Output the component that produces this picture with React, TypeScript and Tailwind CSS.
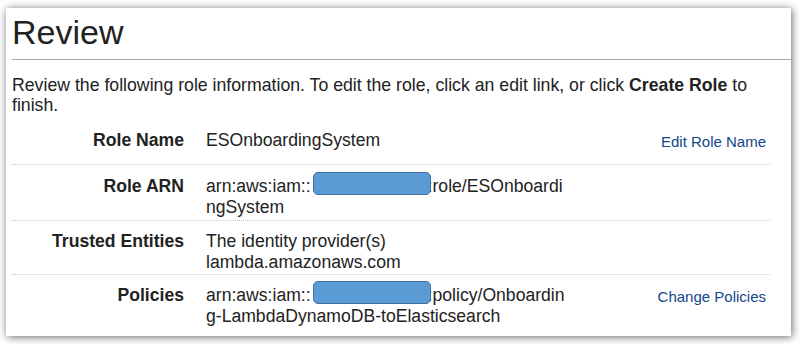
import React from "react";

const Box = () => (
  <span className="relative z-10 inline-block h-[23px] w-[118px] -mt-[5px] ml-[2px] -mr-[3px] align-[-3px] rounded-[5px] border-[1.5px] border-[#41719c] bg-[#5b9bd5]" />
);

function Row({
  label,
  children,
  link,
  className,
  last,
}: {
  label: string;
  children: React.ReactNode;
  link?: string;
  className: string;
  last?: boolean;
}) {
  return (
    <div
      className={`flex items-start ${last ? "" : "border-b border-dotted border-[#c8c8c8]"} ${className}`}
    >
      <div className="w-[172px] shrink-0 text-right font-bold text-[17.6px] leading-[21px] text-[#222]">
        {label}
      </div>
      <div className="ml-[22px] flex-1 text-[17.6px] leading-[21px] text-[#222] whitespace-nowrap">
        {children}
      </div>
      {link && (
        <div className="pr-[4px] pt-[1px] text-[15px] leading-[21px] text-[#12468a]">{link}</div>
      )}
    </div>
  );
}

export default function App() {
  return (
    <div
      className="h-[344px] w-[800px] overflow-hidden bg-white pl-[6px] pt-[8px]"
      style={{ fontFamily: '"Liberation Sans", Arial, sans-serif' }}
    >
      <div className="h-[328px] w-[785px] bg-white shadow-[1px_1px_8px_rgba(0,0,0,0.6)]">
        <div className="pl-[6px] pt-[4px]">
          <h1 className="text-[34px] leading-[40px] text-[#222]">Review</h1>
        </div>
        <div className="ml-[6px] mt-[7px] h-px bg-[#a8a8a8]" />
        <div className="pl-[6px]">
          <p className="mt-[15px] w-[758px] text-[17.7px] leading-[20px] text-[#222]">
            <span>
              Review the following role information. To edit the role, click an edit link, or click{" "}
            </span>
            <b>Create Role</b>
            <span> to </span>
            <span>finish.</span>
          </p>
          <div className="mt-[15px] w-[758px]">
            <Row label="Role Name" link="Edit Role Name" className="pb-[12px]">
              ESOnboardingSystem
            </Row>
            <Row label="Role ARN" className="pt-[11px] pb-[2px]">
              <div>
                {"arn:aws:iam::"}
                <Box />
                {":role/ESOnboardi"}
              </div>
              <div>ngSystem</div>
            </Row>
            <Row label="Trusted Entities" className="pt-[10px] pb-[1px]">
              <div>The identity provider(s)</div>
              <div>lambda.amazonaws.com</div>
            </Row>
            <Row label="Policies" link="Change Policies" className="pt-[10px]" last>
              <div>
                {"arn:aws:iam::"}
                <Box />
                {":policy/Onboardin"}
              </div>
              <div>g-LambdaDynamoDB-toElasticsearch</div>
            </Row>
          </div>
        </div>
      </div>
    </div>
  );
}
